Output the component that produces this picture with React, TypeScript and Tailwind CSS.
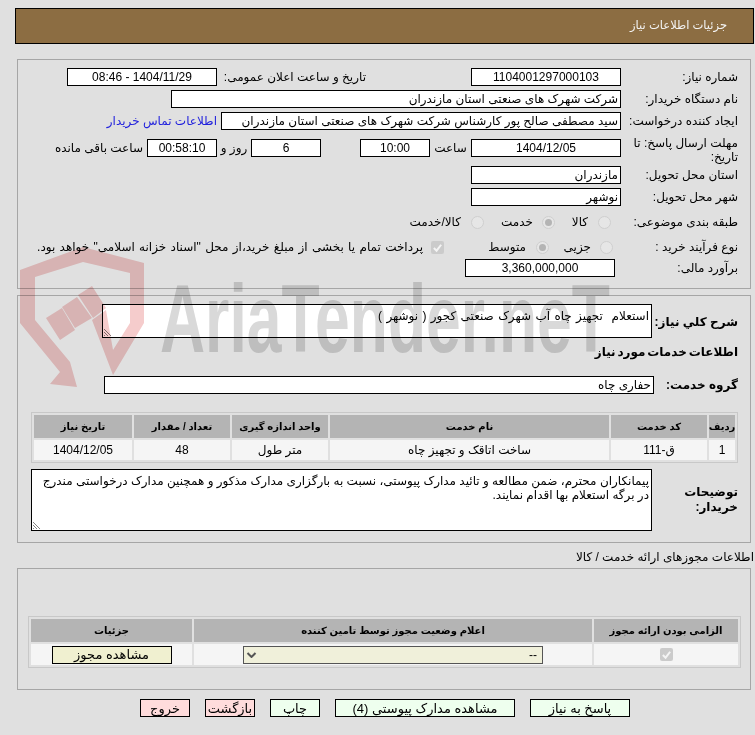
const font = "[font-family:'Liberation_Sans','DejaVu_Sans',sans-serif]";

const Box = ({ className = "", children }: { className?: string; children?: React.ReactNode }) => (
  <div className={`h-[18px] shrink-0 border border-black bg-white text-[12px] leading-[16px] px-[2px] whitespace-nowrap overflow-hidden ${className}`}>{children}</div>
);

const Label = ({ className = "", children }: { className?: string; children?: React.ReactNode }) => (
  <div className={`shrink-0 text-[12px] leading-[18px] text-black whitespace-nowrap ${className}`}>{children}</div>
);

const Radio = ({ checked = false }: { checked?: boolean }) => (
  <span className="flex h-[13px] w-[13px] shrink-0 items-center justify-center rounded-full border border-[#cfcfcf] bg-[#e6e6e6]">
    {checked && <span className="h-[7px] w-[7px] rounded-full bg-[#b4b4b4]" />}
  </span>
);

const Check = () => (
  <span className="flex h-[13px] w-[13px] shrink-0 items-center justify-center rounded-[2px] bg-[#cbcbcb]">
    <svg viewBox="0 0 12 12" className="h-[11px] w-[11px]">
      <path d="M2 6.5 L5 9.5 L10 3" fill="none" stroke="#f4f4f4" strokeWidth="2.2" />
    </svg>
  </span>
);

const Th = ({ children }: { children?: React.ReactNode }) => (
  <div className="flex h-[23px] items-center justify-center bg-[#b4b4b4] text-[10px] font-bold text-black whitespace-nowrap">{children}</div>
);

const Td = ({ className = "", children }: { className?: string; children?: React.ReactNode }) => (
  <div className={`flex items-center justify-center bg-[#f5f5f5] text-[12px] text-black whitespace-nowrap ${className}`}>{children}</div>
);

const Btn = ({ className = "", children }: { className?: string; children?: React.ReactNode }) => (
  <button className={`h-[18px] border border-black text-[13px] leading-[15px] text-black whitespace-nowrap ${className}`}>{children}</button>
);

const Grip = () => (
  <svg viewBox="0 0 9 9" className="absolute bottom-0 left-0 h-[9px] w-[9px]">
    <path d="M1 1 L8 8 M1 4 L5 8 M1 7 L2 8" stroke="#666" strokeWidth="0.8" />
  </svg>
);

export default function App() {
  return (
    <div dir="rtl" className={`relative h-[735px] w-[755px] overflow-hidden bg-[#e0e0e0] ${font}`}>
      <div className="ml-[15px] mr-px pt-[8px]">
        <div className="flex h-[36px] items-center border border-black bg-[#8c6d42] pr-[26px] text-[11.5px] text-[#f4f4f4]">جزئیات اطلاعات نیاز</div>
      </div>

      {/* main info */}
      <div className="mr-[4px] ml-[17px] mt-[15px] h-[230px] border border-[#a6a6a6] pt-[8px] pr-[12px]">
        <div className="flex h-[18px] items-center">
          <Label className="w-[117px]">شماره نیاز:</Label>
          <Box className="w-[150px] text-center">1104001297000103</Box>
          <Label className="mr-[105px] w-[149px]">تاریخ و ساعت اعلان عمومی:</Label>
          <Box className="w-[150px] text-center">1404/11/29 - 08:46</Box>
        </div>
        <div className="mt-[4px] flex h-[18px] items-center">
          <Label className="w-[117px]">نام دستگاه خریدار:</Label>
          <Box className="w-[450px]">شرکت شهرک های صنعتی استان مازندران</Box>
        </div>
        <div className="mt-[4px] flex h-[18px] items-center">
          <Label className="w-[117px]">ایجاد کننده درخواست:</Label>
          <Box className="w-[400px]">سید مصطفی صالح پور کارشناس شرکت شهرک های صنعتی استان مازندران</Box>
          <span className="mr-[4px] text-[12px] text-[#2222dd] whitespace-nowrap">اطلاعات تماس خریدار</span>
        </div>
        <div className="mt-[9px] flex h-[18px] items-start">
          <div className="-mt-[3px] w-[117px] shrink-0 text-[12px] leading-[14px] text-black whitespace-nowrap">مهلت ارسال پاسخ: تا<br />تاریخ:</div>
          <Box className="w-[150px] text-center">1404/12/05</Box>
          <Label className="w-[41px] text-center">ساعت</Label>
          <Box className="w-[70px] text-center">10:00</Box>
          <Box className="mr-[39px] w-[70px] text-center">6</Box>
          <Label className="w-[34px] text-center">روز و</Label>
          <Box className="w-[70px] bg-[#f0f0d0] text-center">00:58:10</Box>
          <Label className="mr-[4px]">ساعت باقی مانده</Label>
        </div>
        <div className="mt-[9px] flex h-[18px] items-center">
          <Label className="w-[117px]">استان محل تحویل:</Label>
          <Box className="w-[150px]">مازندران</Box>
        </div>
        <div className="mt-[4px] flex h-[18px] items-center">
          <Label className="w-[117px]">شهر محل تحویل:</Label>
          <Box className="w-[150px]">نوشهر</Box>
        </div>
        <div className="mt-[7px] flex h-[18px] items-center">
          <Label className="w-[127px]">طبقه بندی موضوعی:</Label>
          <Radio />
          <Label className="mr-[10px] w-[33px]">کالا</Label>
          <Radio checked />
          <Label className="mr-[9px] w-[49px]">خدمت</Label>
          <Radio />
          <Label className="mr-[10px]">کالا/خدمت</Label>
        </div>
        <div className="mt-[7px] flex h-[18px] items-center">
          <Label className="w-[125px]">نوع فرآیند خرید :</Label>
          <Radio />
          <Label className="mr-[9px] w-[42px]">جزیی</Label>
          <Radio checked />
          <Label className="mr-[10px] w-[82px]">متوسط</Label>
          <Check />
          <Label className="mr-[8px] [word-spacing:1px]">پرداخت تمام یا بخشی از مبلغ خرید،از محل "اسناد خزانه اسلامی" خواهد بود.</Label>
        </div>
        <div className="mt-[3px] flex h-[18px] items-center">
          <Label className="w-[123px]">برآورد مالی:</Label>
          <Box className="w-[150px] text-center">3,360,000,000</Box>
        </div>
      </div>

      {/* description */}
      <div className="mr-[4px] ml-[17px] mt-[6px] h-[248px] border border-[#a6a6a6] pr-[12px]">
        <div className="flex pt-[8px]">
          <Label className="mt-[9px] w-[86px] font-bold">شرح کلي نیاز:</Label>
          <div className="relative h-[34px] w-[550px] whitespace-pre-wrap border border-black bg-white px-[2px] pt-[3px] text-[12px] leading-[16px] [word-spacing:1px]">
            استعلام  تجهیز چاه آب شهرک صنعتی کجور ( نوشهر )
            <Grip />
          </div>
        </div>
        <div className="mt-[2px] h-[24px] text-[12px] font-bold leading-[24px] [word-spacing:-1.5px]">اطلاعات خدمات مورد نیاز</div>
        <div className="mt-[12px] flex h-[18px] items-center">
          <Label className="w-[84px] font-bold">گروه خدمت:</Label>
          <Box className="w-[550px]">حفاری چاه</Box>
        </div>
        <div className="mt-[18px] grid w-[707px] grid-cols-[26px_96px_279px_96px_96px_98px] gap-[2px] border border-[#c8c8c8] p-[2px]">
          <Th>ردیف</Th>
          <Th>کد خدمت</Th>
          <Th>نام خدمت</Th>
          <Th>واحد اندازه گیری</Th>
          <Th>تعداد / مقدار</Th>
          <Th>تاریخ نیاز</Th>
          <Td className="h-[20px]">1</Td>
          <Td className="h-[20px]">ق-111</Td>
          <Td className="h-[20px]">ساخت اتاقک و تجهیز چاه</Td>
          <Td className="h-[20px]">متر طول</Td>
          <Td className="h-[20px]">48</Td>
          <Td className="h-[20px]">1404/12/05</Td>
        </div>
        <div className="mt-[6px] flex">
          <div className="mt-[16px] w-[86px] shrink-0 text-[12px] font-bold leading-[15px] text-black whitespace-nowrap">توضیحات<br />خریدار:</div>
          <div className="relative h-[62px] w-[621px] border border-black bg-white px-[2px] pt-[4px] text-[12px] leading-[14px]">
            پیمانکاران محترم، ضمن مطالعه و تائید مدارک پیوستی، نسبت به بارگزاری مدارک مذکور و همچنین مدارک درخواستی مندرج در برگه استعلام بها اقدام نمایند.
            <Grip />
          </div>
        </div>
      </div>

      <div className="mr-px mt-[5px] h-[19px] text-[12px] leading-[19px]">اطلاعات مجوزهای ارائه خدمت / کالا</div>

      {/* permits */}
      <div className="mr-[4px] ml-[17px] mt-[1px] h-[122px] border border-[#a6a6a6] pt-[47px] pr-[9px]">
        <div className="grid w-[713px] grid-cols-[144px_398px_161px] gap-[2px] border border-[#c8c8c8] p-[2px]">
          <Th>الزامی بودن ارائه مجوز</Th>
          <Th>اعلام وضعیت مجوز توسط تامین کننده</Th>
          <Th>جزئیات</Th>
          <Td className="h-[21px]"><Check /></Td>
          <Td className="h-[21px]">
            <div className="flex h-[18px] w-[300px] items-center justify-between border border-[#555] bg-[#f0f0da] px-[2px]">
              <span className="pr-[3px]">--</span>
              <svg viewBox="0 0 10 6" className="h-[6px] w-[11px]">
                <path d="M1 1 L5 5 L9 1" fill="none" stroke="#555" strokeWidth="2" />
              </svg>
            </div>
          </Td>
          <Td className="h-[21px]">
            <Btn className="w-[120px] bg-[#f0f0d0]">مشاهده مجوز</Btn>
          </Td>
        </div>
      </div>

      <div className="mt-[9px] flex pr-[125px]">
        <Btn className="w-[100px] bg-[#eeffee]">پاسخ به نیاز</Btn>
        <Btn className="mr-[15px] w-[180px] bg-[#eeffee]">مشاهده مدارک پیوستی (4)</Btn>
        <Btn className="mr-[15px] w-[50px] bg-[#eeffee]">چاپ</Btn>
        <Btn className="mr-[15px] w-[50px] bg-[#ffdcdc]">بازگشت</Btn>
        <Btn className="mr-[15px] w-[50px] bg-[#ffdcdc]">خروج</Btn>
      </div>

      {/* watermark */}
      <svg viewBox="0 0 755 735" className="pointer-events-none absolute left-0 top-0 h-[735px] w-[755px] mix-blend-multiply">
        <g fill="#f5cccc">
          <path d="M20 270 L83 247 L144 263 L144 323 L113 375 L92 320 L106 310 L113 350 L130 323 L130 273 L83 262 L35 277 L35 320 L70 362 L77 387 L50 384 L60 372 L20 323 Z" />
          <path d="M46 318 L62 308 L75 330 L60 340 Z" />
          <path d="M62 307 L77 297 L92 318 L75 328 Z" />
          <path d="M78 295 L92 286 L106 308 L93 318 Z" />
        </g>
        <text x="160" y="352" direction="ltr" textAnchor="start" textLength="450" lengthAdjust="spacingAndGlyphs" fill="#d9d9d9" fontSize="96" fontWeight="bold" fontFamily="Liberation Sans, sans-serif">AriaTender.neT</text>
      </svg>
    </div>
  );
}
